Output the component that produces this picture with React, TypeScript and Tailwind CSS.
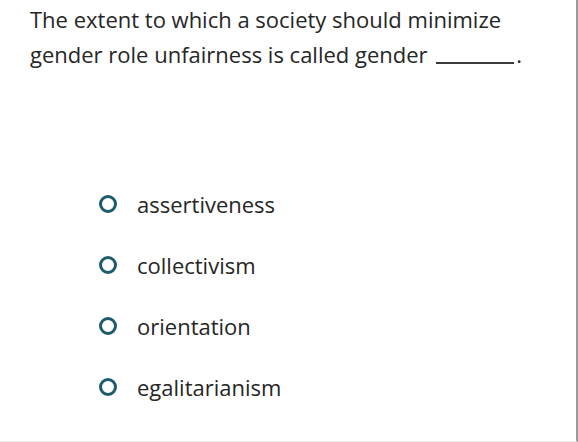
export default function App() {
  const options = ['assertiveness', 'collectivism', 'orientation', 'egalitarianism']
  return (
    <div className="w-[578px] h-[442px] bg-white border-r-2 border-r-[#9a9a9a] border-b border-b-[#ececec] overflow-hidden [font-variant-ligatures:none]" style={{ fontFamily: '"Open Sans", Lato, sans-serif' }}>
      <p className="pl-[30px] pr-4 pt-[2px] text-[22px] leading-[35px] text-[#262626]">
        The extent to which a society should minimize
        <br />
        gender role unfairness is called gender{' '}
        <span className="inline-block ml-[3px] mr-[2px] w-[78px] h-0 border-b-2 border-[#3a3a3a] translate-y-[1px]" />.
      </p>
      <div className="mt-[120px] pl-[99px] flex flex-col gap-[37px]">
        {options.map(o => (
          <label key={o} className="flex items-center gap-[20px] h-[24px]">
            <span className="w-[18px] h-[18px] rounded-full border-[3px] border-[#1e5b6b]" />
            <span className="text-[22px] text-[#262626]">{o}</span>
          </label>
        ))}
      </div>
    </div>
  )
}
